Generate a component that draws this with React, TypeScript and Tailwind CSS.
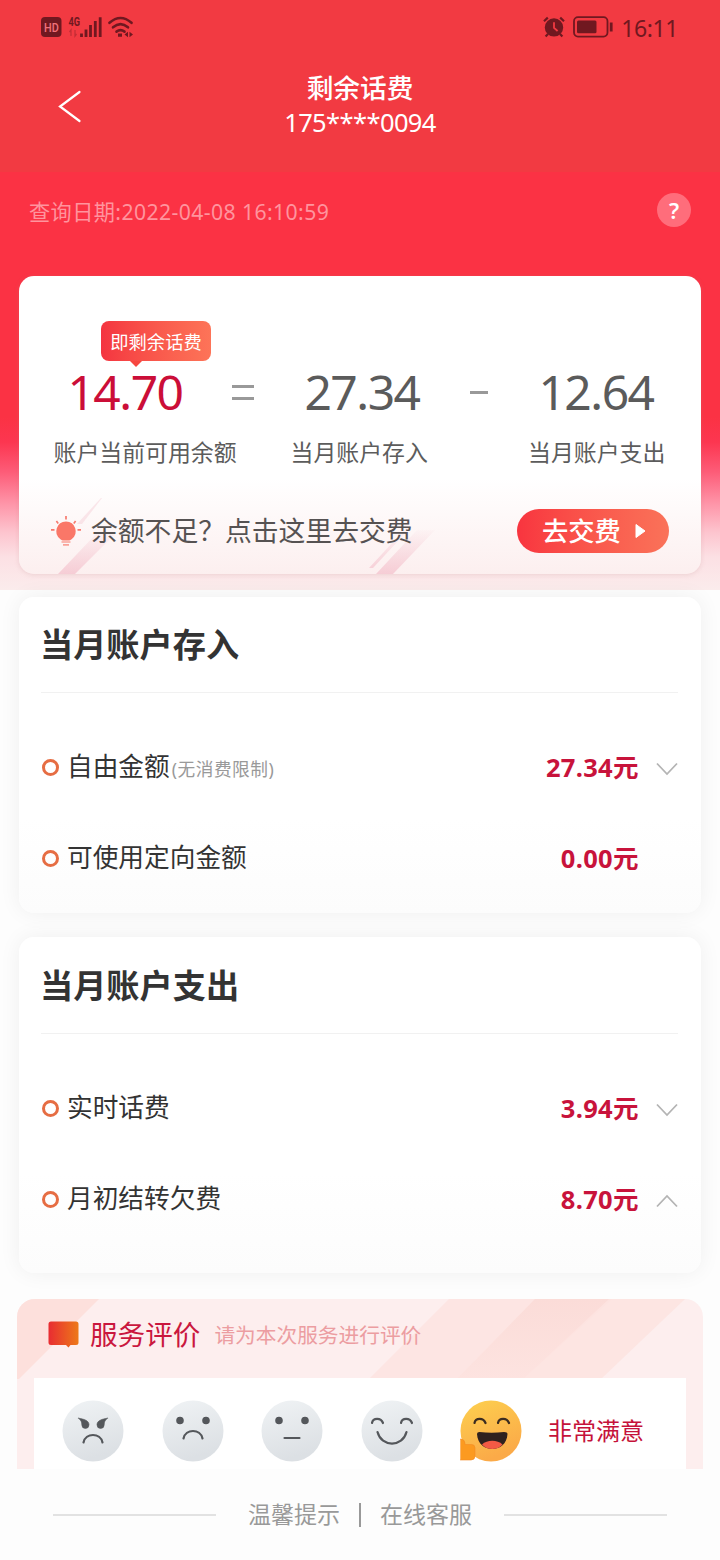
import React from 'react';

type Row = {
  label: string;
  note?: string;
  amount: string;
  arrow?: 'up' | 'down';
};

const incomeRows: Row[] = [
  { label: '自由金额', note: '(无消费限制)', amount: '27.34', arrow: 'down' },
  { label: '可使用定向金额', amount: '0.00' },
];

const expenseRows: Row[] = [
  { label: '实时话费', amount: '3.94', arrow: 'down' },
  { label: '月初结转欠费', amount: '8.70', arrow: 'up' },
];

const StatusBar = () => (
  <div className="flex h-[54px] items-center justify-between pl-[41px] pr-[42px] text-[#701820]">
    <svg width="94" height="24" viewBox="0 0 94 24" fill="none">
      <rect x="0" y="2" width="20.5" height="20" rx="4" fill="currentColor" />
      <text x="3" y="17.2" fontSize="13.5" fontWeight="500" fontFamily="Roboto" textLength="14.8" lengthAdjust="spacingAndGlyphs" fill="#f0727a">HD</text>
      <text x="27.5" y="10.5" fontSize="12" fontWeight="700" fontFamily="Roboto" textLength="11.5" lengthAdjust="spacingAndGlyphs" fill="currentColor">4G</text>
      <path d="M30 21v-6l-1.5 2M34 15v6l1.5-2" stroke="currentColor" strokeOpacity=".35" strokeWidth="1.3" />
      <path d="M40.5 18.5V22M45 14.5V22M49.5 10V22M54.3 6V22M59.2 2.3V22" stroke="currentColor" strokeWidth="2.8" />
      <g stroke="currentColor" strokeWidth="2.6" strokeLinecap="round">
        <path d="M68.5 7.8Q79.5-1.8 90.5 7.8" />
        <path d="M72 12.3Q79.5 6 87 12.3" />
        <path d="M75.5 16.6Q79.5 13.6 83.5 16.6" />
      </g>
      <path d="M77 18.5h4v3.2h-4zM87 16.8v5.4l-3.5-2.7zM88.5 16.8v5.4l3.5-2.7z" fill="currentColor" />
    </svg>
    <div className="flex items-center">
      <svg width="22" height="22" viewBox="0 0 22 22" fill="none">
        <circle cx="11" cy="11.4" r="9.2" fill="currentColor" />
        <path d="M1 5.2L4.8 1.6M21 5.2L17.2 1.6M5 18l-2.4 2.6M17 18l2.4 2.6" stroke="currentColor" strokeWidth="2.2" />
        <path d="M11 6.2v5.6l3.6 3.2" stroke="#f23a42" strokeWidth="1.8" />
      </svg>
      <svg className="ml-2" width="41" height="22" viewBox="0 0 41 22" fill="none">
        <rect x="1" y="1.2" width="33.5" height="19.4" rx="4" stroke="currentColor" strokeWidth="1.8" />
        <rect x="4" y="4.6" width="19.5" height="12.6" rx="1.5" fill="currentColor" />
        <path d="M38.2 6.5v9" stroke="currentColor" strokeWidth="2.8" />
      </svg>
      <span className="ml-[7px] mt-px text-[23px] leading-6 tracking-[-0.4px]">16:11</span>
    </div>
  </div>
);

const Header = () => (
  <header className="h-[172px] bg-[#f23a42]">
    <StatusBar />
    <div className="flex h-[100px] items-center px-[58px] text-white">
      <svg className="mt-[3px] shrink-0" width="24" height="34" viewBox="0 0 24 34" fill="none">
        <path d="M21.5 3L2 17.5L21.5 32" stroke="white" strokeWidth="2.2" strokeLinecap="round" />
      </svg>
      <div className="mt-px flex-1 pr-[24px] text-center">
        <h1 className="text-[26.7px] font-medium leading-[35px]">剩余话费</h1>
        <p className="text-[25.5px] leading-[35px] tracking-[-0.6px]">175****0094</p>
      </div>
    </div>
  </header>
);

const Bulb = () => (
  <svg className="-mt-px" width="32" height="32" viewBox="0 0 32 32" fill="none">
    <path d="M16 1v3.6M6.4 6l1.8 2.4M25.6 6l-1.8 2.4M1 14.8h3.5M27.5 14.8H31" stroke="#f77a6e" strokeWidth="1.7" />
    <path d="M16 6.6a9.7 9.7 0 0 1 5.6 17.6c-1 .8-2 1.3-3.4 1.3h-4.4c-1.4 0-2.4-.5-3.4-1.3A9.7 9.7 0 0 1 16 6.6z" fill="#fa7768" />
    <path d="M11.5 27h9M13 29.8h6" stroke="#f9a198" strokeWidth="1.7" />
  </svg>
);

const BalanceCard = () => (
  <div className="relative mx-[19px] h-[298px] overflow-hidden rounded-[15px] bg-linear-to-b from-white from-68% to-[#fcefef] shadow-[0_1px_5px_rgba(180,130,130,0.22)]">
    <svg className="absolute left-0 top-[210px]" width="681" height="88" viewBox="0 0 681 88">
      <defs>
        <linearGradient id="streak" gradientUnits="userSpaceOnUse" x1="0" y1="44" x2="0" y2="88">
          <stop offset="0" stopColor="#f2b6c4" stopOpacity="0.05" />
          <stop offset="1" stopColor="#f2b6c4" stopOpacity=".6" />
        </linearGradient>
      </defs>
      <path d="M39 88L77 48H96L56 88zM357 88L398 44H416L374 88zM350 82L387 42H391L354 82z" fill="url(#streak)" />
      <path d="M58 38L82 12H83L63 38z" fill="#f2b6c4" opacity=".3" />
    </svg>
    <div className="relative">
      <div className="flex h-[85px] items-end pl-[82px]">
        <div className="relative flex h-10 w-[110px] items-center justify-center rounded-lg bg-linear-to-r from-[#f43440] to-[#fd7458] pt-0.5 text-[18.3px] text-white">
          即剩余话费
          <span className="absolute left-[29px] top-full h-0 w-0 border-x-[6px] border-t-[6px] border-x-transparent border-t-[#f7463f]" />
        </div>
      </div>
      <div className="flex h-[62px] items-center pl-12 text-[48px] leading-[62px] tracking-[-1.5px] text-[#5b5b5b]">
        <span className="w-[116px] text-center text-[#cb0e38]">14.70</span>
        <span className="ml-[49px] h-[15px] w-[22px] border-y-[3px] border-[#999]" />
        <span className="ml-12 w-[120px] text-center">27.34</span>
        <span className="ml-12 h-[3px] w-[18px] bg-[#999]" />
        <span className="ml-[50px] w-[116px] text-center">12.64</span>
      </div>
      <div className="mt-[13px] flex h-[34px] items-center whitespace-nowrap pl-[34.5px] text-[22.9px] text-[#5c5c5c]">
        <span className="w-[184px]">账户当前可用余额</span>
        <span className="ml-[53px] w-[138px]">当月账户存入</span>
        <span className="ml-[99.5px]">当月账户支出</span>
      </div>
      <div className="mt-[39px] flex h-11 items-center pl-[31px] pr-8">
        <Bulb />
        <span className="ml-[9px] text-[26.8px] text-[#565252]">余额不足？点击这里去交费</span>
        <button className="-mt-px ml-auto flex h-11 w-[152px] items-center rounded-full bg-linear-to-r from-[#f8343f] to-[#fa7259] pl-[25px] text-[26.3px] font-medium text-white">
          <span className="mt-0.5">去交费</span>
          <svg className="ml-[14px]" width="11" height="16" viewBox="0 0 11 16">
            <path d="M1 1.5v13l9-6.5z" fill="white" stroke="white" strokeLinejoin="round" />
          </svg>
        </button>
      </div>
    </div>
  </div>
);

const Chevron = ({ dir }: { dir?: 'up' | 'down' }) => (
  <svg className="ml-[17.5px] mt-0.5" width="22" height="14" viewBox="0 0 22 14" fill="none">
    {dir && (
      <path d={dir === 'down' ? 'M1 1.5L11 12L21 1.5' : 'M1 12.5L11 2L21 12.5'} stroke="#b4b4b4" strokeWidth="1.8" />
    )}
  </svg>
);

const DetailCard = ({ title, rows, className }: { title: string; rows: Row[]; className: string }) => (
  <section className={`mx-[19px] rounded-[15px] bg-linear-to-b from-white from-70% to-[#fcfcfc] pl-[22px] pr-[23px] shadow-[0_0_22px_rgba(0,0,0,0.06)] ${className}`}>
    <h2 className="flex h-24 items-center border-b border-[#f1f1f1] text-[33.2px] font-bold text-[#333]">
      <span className="-ml-px">{title}</span>
    </h2>
    <div className="pt-[29px]">
      {rows.map((row) => (
        <div key={row.label} className="flex h-[91px] items-center">
          <span className="ml-px h-[17px] w-[17px] rounded-full border-[3.5px] border-[#e66d43]" />
          <span className="-mt-px ml-2 text-[25.7px] text-[#333]">{row.label}</span>
          {row.note && <span className="ml-0.5 mt-[3px] text-[17.7px] tracking-[0.5px] text-[#999]">{row.note}</span>}
          <span className="-mt-px ml-auto text-[25.5px] font-bold text-[#c8133b]">
            <span className="tracking-[0.3px]">{row.amount}</span>元
          </span>
          <Chevron dir={row.arrow} />
        </div>
      ))}
    </div>
  </section>
);

const Face = ({ children, happy }: { children: React.ReactNode; happy?: boolean }) => (
  <svg width="62" height="62" viewBox="0 0 62 62" fill="none">
    <defs>
      <linearGradient id="faceGray" x1="0" y1="0" x2="0.3" y2="1">
        <stop stopColor="#f0f3f5" />
        <stop offset="1" stopColor="#dce0e4" />
      </linearGradient>
      <linearGradient id="faceGold" x1="0" y1="0" x2="0.4" y2="1">
        <stop stopColor="#fdd04f" />
        <stop offset="1" stopColor="#fbaa48" />
      </linearGradient>
    </defs>
    <circle cx="31" cy="31" r="30.5" fill={happy ? 'url(#faceGold)' : 'url(#faceGray)'} />
    <g stroke="#54575b" strokeWidth="2.2" strokeLinecap="round">{children}</g>
  </svg>
);

const Faces = () => (
  <div className="flex gap-[37.5px]">
    <Face>
      <path d="M16.5 18.2C22 19 27 20.500 27 24.800a3.600 3.600 0 0 1-7.200 0C19.800 22 19 20 16.500 18.200zM45.500 18.200C40 19 35 20.500 35 24.800a3.600 3.600 0 0 0 7.200 0C42.200 22 43 20 45.500 18.200z" fill="#54575b" strokeWidth=".6" />
      <path d="M21.500 42.500c2-10 17-10 19 0" />
    </Face>
    <Face>
      <circle cx="18" cy="20.5" r="2.7" fill="#54575b" />
      <circle cx="44" cy="20.5" r="2.7" fill="#54575b" />
      <path d="M21.500 38.500c2-10 17-10 19 0" />
    </Face>
    <Face>
      <circle cx="18" cy="20.5" r="2.7" fill="#54575b" />
      <circle cx="44" cy="20.5" r="2.7" fill="#54575b" />
      <path d="M23.5 38h15" />
    </Face>
    <Face>
      <path d="M11 23c1-5.500 9-5.500 11 0M40 23c1-5.500 9-5.500 11 0M16.500 32c4 15.500 25 15.500 29 0" />
    </Face>
    <Face happy>
      <path d="M14.500 23c1-5.500 9-5.500 11 0M38 23c1-5.500 9-5.500 11 0" stroke="#3c2c20" />
      <path d="M17 34q0-2 2.500-2q12 1.500 24.500 0q3.500 0 3.500 2c-1 20-29.500 20-30.500 0z" fill="#30211e" stroke="none" />
      <path d="M22 44.500c5-5 15.500-5 20.500 0c-5 6-15.500 6-20.500 0z" fill="#f35a45" stroke="none" />
      <path d="M.5 39q4 0 4.500 4v1.500h6.500q3.500 0 3.500 3.500v8q0 4-4 4H.5z" fill="#fc9a20" stroke="#f48b25" strokeWidth=".6" />
    </Face>
  </div>
);

const Rating = () => (
  <section className="relative mx-[17px] mt-[26px] h-[170px] overflow-hidden rounded-t-[18px] bg-[#fdeeee]">
    <svg className="absolute left-0 top-0" width="686" height="80" viewBox="0 0 686 80">
      <defs>
        <linearGradient id="band" x1="0" y1="0" x2="0" y2="1">
          <stop stopColor="#fbdcd8" />
          <stop offset="1" stopColor="#fde3e0" />
        </linearGradient>
      </defs>
      <path d="M0 0H82L0 82z" fill="#fde0dc" />
      <path d="M432 0H595L506 80H352z" fill="#fce2df" opacity=".75" />
      <path d="M518 0H668L584 80H440z" fill="#fce2df" opacity=".8" />
      <path d="M518 0H592L506 80H440z" fill="url(#band)" />
    </svg>
    <div className="relative flex h-[79px] items-center pb-2 pl-[31px]">
      <svg width="31" height="28" viewBox="0 0 31 28">
        <defs>
          <linearGradient id="bubble">
            <stop stopColor="#e82c32" />
            <stop offset="1" stopColor="#ed7918" />
          </linearGradient>
        </defs>
        <path d="M3 .5H28q2.500 0 2.500 2.500V21.500q0 2.500-2.500 2.500h-5.500L20.500 26.500L18 24H3Q.5 24 .5 21.500v-18.500Q.5 .5 3 .5z" fill="url(#bubble)" />
      </svg>
      <span className="ml-[11px] text-[27.6px] text-[#ca173e]">服务评价</span>
      <span className="ml-3.5 mt-0.5 text-[20.7px] text-[#ec9da1]">请为本次服务进行评价</span>
    </div>
    <div className="relative mx-[17px] flex h-[91px] items-start bg-white pl-7 pt-[22px]">
      <Faces />
      <span className="ml-[26px] mt-[13px] text-[24px] leading-9 text-[#c5123a]">非常满意</span>
    </div>
  </section>
);

const Footer = () => (
  <footer className="flex h-[91px] items-center justify-center bg-[#fdfdfd] text-[23px] text-[#999]">
    <span className="h-0.5 w-[163px] bg-[#e2e2e2]" />
    <span className="ml-8">温馨提示</span>
    <span className="mx-[19px] h-6 w-0.5 bg-[#999]" />
    <span className="mr-8">在线客服</span>
    <span className="h-0.5 w-[163px] bg-[#e2e2e2]" />
  </footer>
);

export default function App() {
  return (
    <div className="h-[1560px] w-[720px] overflow-hidden whitespace-nowrap bg-[#fdfdfd] font-['Noto_Sans','Noto_Sans_CJK_SC',sans-serif]">
      <Header />
      <div className="h-[418px] bg-[linear-gradient(to_bottom,#fb3244_0px,#fb3244_245px,#fc3650_270px,#fd5c78_300px,#fe92a6_330px,#fdc4ce_360px,#fce0e4_385px,#fbecec_418px)]">
        <div className="flex h-[104px] items-start justify-between pl-[29px] pr-[29px] pt-[21px]">
          <span className="mt-[3px] text-[21.2px] leading-8 tracking-[0.4px] text-[#ff949e]">查询日期:2022-04-08 16:10:59</span>
          <span className="flex h-[34px] w-[34px] items-center justify-center rounded-full bg-[#ff6d7b] text-[22px] font-semibold text-white">?</span>
        </div>
        <BalanceCard />
      </div>
      <main className="pt-[7px]">
        <DetailCard title="当月账户存入" rows={incomeRows} className="h-[316px]" />
        <DetailCard title="当月账户支出" rows={expenseRows} className="mt-6 h-[336px] pt-px" />
        <Rating />
      </main>
      <Footer />
    </div>
  );
}
